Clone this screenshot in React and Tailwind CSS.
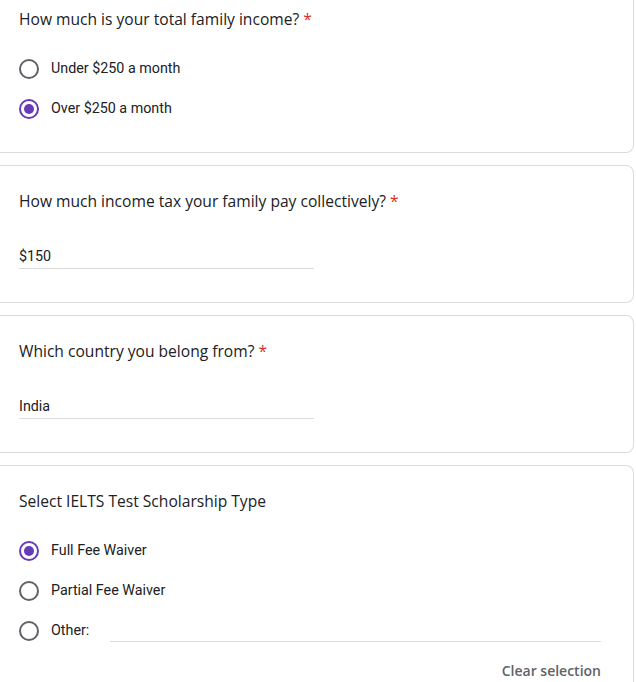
function Radio({ checked }) {
  return checked ? (
    <span className="w-5 h-5 rounded-full border-2 border-[#673ab7] flex items-center justify-center shrink-0">
      <span className="w-2.5 h-2.5 rounded-full bg-[#673ab7]" />
    </span>
  ) : (
    <span className="w-5 h-5 rounded-full border-2 border-[#5f6368] shrink-0" />
  )
}

function Card({ children, className = '' }) {
  return (
    <div className={'bg-white border-y border-r border-[#dadce0] rounded-r-lg mr-[2px] pl-[19px] pr-6 pt-[23px] ' + className}>
      {children}
    </div>
  )
}

function Question({ text, required }) {
  return (
    <div className="text-[15.6px] leading-6 text-[#202124] font-['Open_Sans','Noto_Sans',sans-serif]">
      {text}
      {required && <span className="text-[#d93025] ml-1">*</span>}
    </div>
  )
}

function Option({ label, checked }) {
  return (
    <div className="flex items-center h-10">
      <Radio checked={checked} />
      <span className="ml-3 text-[14.3px] text-[#202124]">{label}</span>
    </div>
  )
}

function TextAnswer({ value }) {
  return (
    <div className="mt-[33px] w-[295px] border-b border-[#dadce0] pb-[2px] text-[14.3px] text-[#202124] leading-5">
      {value}
    </div>
  )
}

export default function App() {
  return (
    <div className="bg-white min-h-[682px] overflow-hidden font-['Roboto',sans-serif]">
      <div className="-mt-[17px] flex flex-col gap-3">
        <Card className="pb-[23px]">
          <Question text="How much is your total family income?" required />
          <div className="mt-[18px]">
            <Option label="Under $250 a month" />
            <Option label="Over $250 a month" checked />
          </div>
        </Card>

        <Card className="pb-[33px]">
          <Question text="How much income tax your family pay collectively?" required />
          <TextAnswer value="$150" />
        </Card>

        <Card className="pb-[33px]">
          <Question text="Which country you belong from?" required />
          <TextAnswer value="India" />
        </Card>

        <Card className="pb-4 pr-8">
          <Question text="Select IELTS Test Scholarship Type" />
          <div className="mt-[18px]">
            <Option label="Full Fee Waiver" checked />
            <Option label="Partial Fee Waiver" />
            <div className="flex items-center h-10">
              <Radio />
              <span className="ml-3 text-[14.3px] text-[#202124]">Other:</span>
              <span className="ml-[21px] flex-1 self-end mb-[9px] border-b border-[#dadce0]" />
            </div>
          </div>
          <div className="flex justify-end mt-[10px]">
            <span className="text-sm leading-5 font-semibold text-[#5f6368] font-['Open_Sans',sans-serif]">Clear selection</span>
          </div>
        </Card>
      </div>
    </div>
  )
}
